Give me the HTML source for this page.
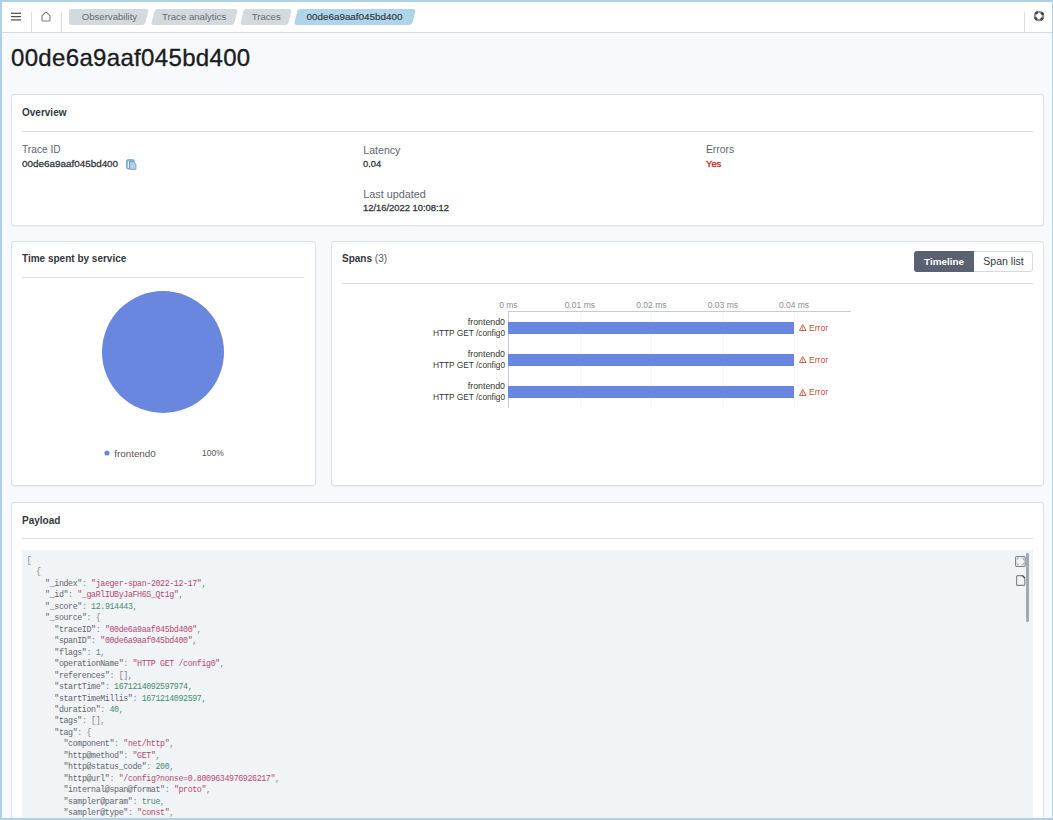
<!DOCTYPE html>
<html><head><meta charset="utf-8">
<style>
*{box-sizing:border-box;margin:0;padding:0}
html,body{width:1053px;height:820px;overflow:hidden}
body{position:relative;background:#f7f9fc;font-family:"Liberation Sans",sans-serif;color:#343741}
.a{position:absolute;white-space:nowrap}
#frame{position:absolute;left:0;top:0;width:1053px;height:820px;border:2px solid #acd2e8;border-right-width:1.2px;pointer-events:none;z-index:50}
#hdr{position:absolute;left:0;top:0;width:1053px;height:33px;background:#fff;border-bottom:1px solid #d6dbe6}
.vdiv{position:absolute;top:12px;width:1px;height:20px;background:#d9dee9}
.crumb{position:absolute;top:9px;height:15.6px;font-size:9.6px;line-height:15.6px;color:#646a77;text-align:center;white-space:nowrap}
.crumb .bg{position:absolute;left:0;top:0;right:0;bottom:0;background:#d3dadd;border-radius:3px;transform:skewX(-14deg)}
.crumb span{position:relative}
.panel{position:absolute;background:#fff;border:1px solid #dbe0e9;border-radius:3px;box-shadow:0 1px 1px rgba(0,0,0,0.03)}
.ptitle{position:absolute;font-size:10px;font-weight:bold;color:#343741;white-space:nowrap}
.rule{position:absolute;height:1px;background:#d9dee8}
.lbl{position:absolute;font-size:10px;color:#5e6470;white-space:nowrap}
.val{position:absolute;font-size:9.4px;font-weight:normal;-webkit-text-stroke:0.3px currentColor;color:#343741;white-space:nowrap}
.tick{position:absolute;top:300px;font-size:8.5px;color:#8a8f98;white-space:nowrap;transform:translateX(-50%)}
.grid{position:absolute;top:312px;width:1px;height:96px;background:#f6f6f6}
.bar{position:absolute;left:508px;width:286px;height:12.6px;background:#6a87e0}
.sl{position:absolute;right:548px;line-height:1.117;color:#333;text-align:right;white-space:nowrap}
.err{position:absolute;left:809px;font-size:8.6px;line-height:1;color:#c9503f;white-space:nowrap}
pre{position:absolute;left:26.7px;top:554.7px;font-family:"Liberation Mono",monospace;font-size:8.3px;letter-spacing:-0.38px;line-height:11.48px;color:#7d828b}
pre i{font-style:normal}
pre .k{color:#5f6570}
pre .s{color:#b4486f}
pre .n{color:#438c72}
</style></head><body>
<div id="hdr">
  <svg class="a" style="left:11px;top:12px" width="10" height="9" viewBox="0 0 10 9"><rect x="0" y="0.7" width="10" height="1.2" fill="#4a4e57"/><rect x="0" y="4" width="10" height="1.2" fill="#4a4e57"/><rect x="0" y="7.3" width="10" height="1.2" fill="#4a4e57"/></svg>
  <div class="vdiv" style="left:31px"></div>
  <svg class="a" style="left:41px;top:11px" width="10" height="11" viewBox="0 0 10 11"><path d="M1 4.8 L4.2 1.7 Q5 1 5.8 1.7 L9 4.8 L9 9.2 Q9 10 8.2 10 L1.8 10 Q1 10 1 9.2 Z" fill="none" stroke="#7c7f87" stroke-width="1.1" stroke-linejoin="round"/></svg>
  <div class="vdiv" style="left:61px"></div>
  <div class="crumb" style="left:72px;width:75.2px"><div class="bg"></div></div>
  <div class="a" style="left:68.7px;top:9px;width:20px;height:15.6px;background:#d3dadd;border-radius:3px"></div>
  <div class="crumb" style="left:68.7px;width:78.5px;padding-left:3px"><span>Observability</span></div>
  <div class="crumb" style="left:152.9px;width:82.5px"><div class="bg"></div><span>Trace analytics</span></div>
  <div class="crumb" style="left:242.2px;width:48.1px"><div class="bg"></div><span>Traces</span></div>
  <div class="crumb" style="left:295.5px;width:118px;color:#343741;font-size:9.9px;-webkit-text-stroke:0.15px currentColor"><div class="bg" style="background:#b0d4e9"></div><span>00de6a9aaf045bd400</span></div>
  <div class="vdiv" style="left:1024px"></div>
  <svg class="a" style="left:1032.6px;top:10px" width="12" height="12" viewBox="0 0 12 12"><circle cx="6" cy="6" r="4.1" fill="none" stroke="#8e939c" stroke-width="2.3"/><circle cx="6" cy="6" r="4.1" fill="none" stroke="#3a3e47" stroke-width="2.5" stroke-dasharray="2.9 3.54" stroke-dashoffset="-1.78"/></svg>
</div>

<div class="a" style="left:11px;top:43.6px;font-size:24px;letter-spacing:0.33px;-webkit-text-stroke:0.35px #1a1c21;color:#1a1c21">00de6a9aaf045bd400</div>

<!-- Overview -->
<div class="panel" style="left:11px;top:94px;width:1033px;height:132px"></div>
<div class="ptitle" style="left:22px;top:107px">Overview</div>
<div class="rule" style="left:22px;top:131px;width:1011px"></div>
<div class="lbl" style="left:22px;top:144px;font-size:10.2px">Trace ID</div>
<div class="val" style="left:22px;top:157.6px;font-size:9.9px">00de6a9aaf045bd400</div>
<svg class="a" style="left:126px;top:159px" width="11" height="11" viewBox="0 0 11 11"><path d="M0.7 1.8 Q0.7 0.8 1.7 0.8 L7.2 0.8 Q8.2 0.8 8.2 1.8 L8.2 2.6 L3.4 2.6 L3.4 9.8 L1.7 9.8 Q0.7 9.8 0.7 8.8 Z" fill="#9dbfe0" stroke="#6092c0" stroke-width="0.9"/><rect x="1.9" y="2.4" width="0.9" height="6.4" fill="#fff"/><path d="M3.6 2.8 L7.6 2.8 L9.9 5 L9.9 10.3 L3.6 10.3 Z" fill="#b5cfe9" stroke="#6f9cc8" stroke-width="0.9"/></svg>
<div class="lbl" style="left:363.3px;top:143.8px;font-size:10.6px">Latency</div>
<div class="val" style="left:363px;top:158px">0.04</div>
<div class="lbl" style="left:363.3px;top:187.5px;font-size:10.8px">Last updated</div>
<div class="val" style="left:363px;top:202px">12/16/2022 10:08:12</div>
<div class="lbl" style="left:706px;top:144px;font-size:10.3px">Errors</div>
<div class="val" style="left:706px;top:158px;color:#bd271e">Yes</div>

<!-- Time spent -->
<div class="panel" style="left:11px;top:241px;width:305px;height:245px"></div>
<div class="ptitle" style="left:22px;top:253px">Time spent by service</div>
<div class="rule" style="left:22px;top:277px;width:282px"></div>
<svg class="a" style="left:102px;top:291px" width="122" height="122"><circle cx="61" cy="61" r="61" fill="#6a87e0"/></svg>
<svg class="a" style="left:104px;top:450px" width="6" height="6"><circle cx="3" cy="3" r="2.6" fill="#6a87e0"/></svg>
<div class="a" style="left:114.3px;top:447.5px;font-size:9.8px;color:#555">frontend0</div>
<div class="a" style="left:202px;top:448px;font-size:8.5px;color:#555">100%</div>

<!-- Spans -->
<div class="panel" style="left:331px;top:241px;width:713px;height:245px"></div>
<div class="ptitle" style="left:342px;top:253px">Spans <span style="font-weight:normal;color:#535966">(3)</span></div>
<div class="a" style="left:914px;top:251px;width:119px;height:21px;border:1px solid #d3dae6;border-radius:3px;background:#fff"></div>
<div class="a" style="left:914px;top:251px;width:60px;height:21px;background:#5a6272;border-radius:3px 0 0 3px"></div>
<div class="a" style="left:914px;top:255.6px;width:60px;text-align:center;font-size:9.9px;font-weight:bold;color:#fff">Timeline</div>
<div class="a" style="left:974px;top:255.3px;width:59px;text-align:center;font-size:10.5px;color:#343741">Span list</div>
<div class="rule" style="left:342px;top:283px;width:691px"></div>

<div class="grid" style="left:579.5px"></div>
<div class="grid" style="left:651px"></div>
<div class="grid" style="left:722.5px"></div>
<div class="grid" style="left:794px"></div>
<div class="a" style="left:508px;top:311px;width:343px;height:1.3px;background:#c8cbd0"></div>
<div class="a" style="left:507.5px;top:311px;width:1.3px;height:97px;background:#c8cbd0"></div>
<div class="tick" style="left:508.4px">0 ms</div>
<div class="tick" style="left:579.9px">0.01 ms</div>
<div class="tick" style="left:651.4px">0.02 ms</div>
<div class="tick" style="left:722.9px">0.03 ms</div>
<div class="tick" style="left:794px">0.04 ms</div>
<div class="bar" style="top:321.6px"></div>
<div class="bar" style="top:353.7px"></div>
<div class="bar" style="top:385.9px"></div>
<div class="sl" style="top:317.6px;font-size:8.8px">frontend0</div>
<div class="sl" style="top:328.5px;font-size:8.3px">HTTP GET /config0</div>
<div class="sl" style="top:349.7px;font-size:8.8px">frontend0</div>
<div class="sl" style="top:360.6px;font-size:8.3px">HTTP GET /config0</div>
<div class="sl" style="top:381.8px;font-size:8.8px">frontend0</div>
<div class="sl" style="top:392.7px;font-size:8.3px">HTTP GET /config0</div>
<svg class="a" style="left:799px;top:324.3px" width="7.5" height="7" viewBox="0 0 15 14"><path d="M7.5 1.2 L14 13 L1 13 Z" fill="none" stroke="#c9503f" stroke-width="1.8" stroke-linejoin="round"/><rect x="6.7" y="5" width="1.6" height="4.5" fill="#c9503f"/><rect x="6.7" y="10.3" width="1.6" height="1.6" fill="#c9503f"/></svg>
<div class="err" style="top:323.8px">Error</div>
<svg class="a" style="left:799px;top:356.4px" width="7.5" height="7" viewBox="0 0 15 14"><path d="M7.5 1.2 L14 13 L1 13 Z" fill="none" stroke="#c9503f" stroke-width="1.8" stroke-linejoin="round"/><rect x="6.7" y="5" width="1.6" height="4.5" fill="#c9503f"/><rect x="6.7" y="10.3" width="1.6" height="1.6" fill="#c9503f"/></svg>
<div class="err" style="top:355.9px">Error</div>
<svg class="a" style="left:799px;top:388.5px" width="7.5" height="7" viewBox="0 0 15 14"><path d="M7.5 1.2 L14 13 L1 13 Z" fill="none" stroke="#c9503f" stroke-width="1.8" stroke-linejoin="round"/><rect x="6.7" y="5" width="1.6" height="4.5" fill="#c9503f"/><rect x="6.7" y="10.3" width="1.6" height="1.6" fill="#c9503f"/></svg>
<div class="err" style="top:388.0px">Error</div>

<!-- Payload -->
<div class="panel" style="left:11px;top:502px;width:1033px;height:330px"></div>
<div class="ptitle" style="left:22px;top:515px">Payload</div>
<div class="rule" style="left:22px;top:538px;width:1011px"></div>
<div class="a" style="left:22px;top:549.7px;width:1011px;height:280px;background:#f1f4f7"></div>
<pre>[
  {
    <i class="k">"_index"</i>: <i class="s">"jaeger-span-2022-12-17"</i>,
    <i class="k">"_id"</i>: <i class="s">"_gaRlIUByJaFH6S_Qt1g"</i>,
    <i class="k">"_score"</i>: <i class="n">12.914443</i>,
    <i class="k">"_source"</i>: {
      <i class="k">"traceID"</i>: <i class="s">"00de6a9aaf045bd400"</i>,
      <i class="k">"spanID"</i>: <i class="s">"00de6a9aaf045bd400"</i>,
      <i class="k">"flags"</i>: <i class="n">1</i>,
      <i class="k">"operationName"</i>: <i class="s">"HTTP GET /config0"</i>,
      <i class="k">"references"</i>: [],
      <i class="k">"startTime"</i>: <i class="n">1671214092597974</i>,
      <i class="k">"startTimeMillis"</i>: <i class="n">1671214092597</i>,
      <i class="k">"duration"</i>: <i class="n">40</i>,
      <i class="k">"tags"</i>: [],
      <i class="k">"tag"</i>: {
        <i class="k">"component"</i>: <i class="s">"net/http"</i>,
        <i class="k">"http@method"</i>: <i class="s">"GET"</i>,
        <i class="k">"http@status_code"</i>: <i class="n">200</i>,
        <i class="k">"http@url"</i>: <i class="s">"/config?nonse=0.8009634976926217"</i>,
        <i class="k">"internal@span@format"</i>: <i class="s">"proto"</i>,
        <i class="k">"sampler@param"</i>: <i class="n">true</i>,
        <i class="k">"sampler@type"</i>: <i class="s">"const"</i>,
        <i class="k">"sampler@other"</i>: <i class="s">"x"</i>,</pre>
<div class="a" style="left:1026.2px;top:553px;width:3px;height:69px;background:#a4a8b0;border-radius:1px"></div>
<svg class="a" style="left:1015px;top:556.3px" width="11" height="11" viewBox="0 0 11 11"><rect x="0.55" y="0.55" width="9.6" height="9.9" rx="1.4" fill="none" stroke="#7d828c" stroke-width="1.1"/><path d="M2.2 4.2 V2.2 H4.2 M6.5 2.2 H8.5 V4.2 M8.5 6.7 V8.7 H6.5 M4.2 8.7 H2.2 V6.7" fill="none" stroke="#9a9ea6" stroke-width="0.8"/></svg>
<svg class="a" style="left:1015.5px;top:575px" width="10" height="11" viewBox="0 0 10 11"><path d="M0.6 1.6 Q0.6 0.6 1.6 0.6 L6.6 0.6 L8.8 2.8 L8.8 9.4 Q8.8 10.4 7.8 10.4 L1.6 10.4 Q0.6 10.4 0.6 9.4 Z" fill="none" stroke="#7d828c" stroke-width="1.1"/><path d="M6.4 0.6 L8.8 3" stroke="#4a4f58" stroke-width="1.3"/></svg>

<div id="frame"></div>
</body></html>
